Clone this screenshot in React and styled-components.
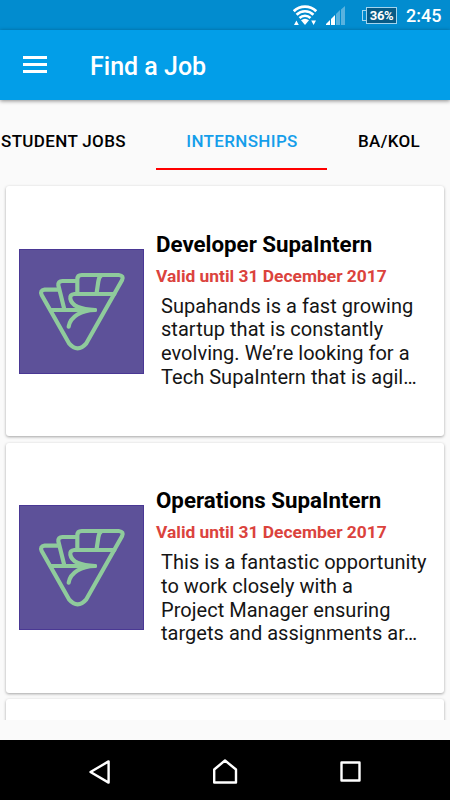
import styled, { createGlobalStyle } from "styled-components";

const GlobalStyle = createGlobalStyle`
  * {
    box-sizing: border-box;
  }

  body {
    margin: 0;
    background: #fafafa;
    font-family: Roboto, sans-serif;
  }

  h1, h2, p {
    margin: 0;
  }
`;

const Screen = styled.div`
  display: flex;
  flex-direction: column;
  width: 450px;
  height: 800px;
  overflow: hidden;
  background: #fafafa;
`;

const StatusBar = styled.div`
  display: flex;
  align-items: center;
  justify-content: flex-end;
  flex: 0 0 30px;
  padding-right: 10px;
  background: #028ccf;
  color: #ffffff;
`;

const Clock = styled.time`
  width: 34px;
  margin-left: 9px;
  padding-top: 2px;
  font-size: 18px;
  font-weight: 500;
  line-height: 20px;
  white-space: nowrap;
`;

const Battery = styled.div`
  display: flex;
  align-items: center;
  margin-left: 17px;

  &::before {
    content: "";
    width: 3px;
    height: 9px;
    border: 1px solid #a3d5ee;
    border-right: 0;
  }
`;

const BatteryLevel = styled.span`
  width: 31px;
  height: 17px;
  border: 1px solid #a3d5ee;
  background: #075b86;
  font-size: 13px;
  font-weight: 700;
  letter-spacing: -0.4px;
  line-height: 15px;
  text-align: center;
`;

const Signal = styled.svg`
  margin-left: 9px;
`;

const Toolbar = styled.header`
  display: flex;
  align-items: center;
  flex: 0 0 70px;
  padding: 4px 23px 0;
  gap: 43px;
  background: #029ee8;
  box-shadow: 0 1px 4px rgba(0, 0, 0, 0.45);
`;

const MenuButton = styled.button`
  display: flex;
  flex-direction: column;
  justify-content: space-between;
  width: 24px;
  height: 17px;
  margin-top: -6px;
  padding: 0;
  border: 0;
  background: none;
`;

const MenuLine = styled.span`
  height: 3px;
  background: #ffffff;
`;

const PageTitle = styled.h1`
  color: #ffffff;
  font-size: 25px;
  font-weight: 500;
  line-height: 30px;
`;

const Tabs = styled.nav`
  display: flex;
  flex: 0 0 70px;
`;

const Tab = styled.button`
  flex: 0 0 ${({ $width }) => $width}px;
  padding: 14px 0 0 1px;
  border: 0;
  border-bottom: 2px solid ${({ $active }) => ($active ? "#ff0000" : "transparent")};
  background: none;
  color: ${({ $active }) => ($active ? "#159eea" : "#000000")};
  font-family: inherit;
  font-size: 17px;
  font-weight: 500;
  letter-spacing: 0.35px;
  text-align: ${({ $align }) => $align || "center"};
  white-space: nowrap;
`;

const JobList = styled.main`
  display: flex;
  flex-direction: column;
  flex: 0 0 550px;
  gap: 6.5px;
  padding: 16px 6px 0;
  overflow: hidden;
`;

const Card = styled.article`
  display: flex;
  align-items: center;
  flex: 0 0 250px;
  gap: 12px;
  padding: 0 13px;
  border-radius: 3px;
  background: #ffffff;
  box-shadow: 0 1px 3px rgba(0, 0, 0, 0.35);
`;

const Logo = styled.svg`
  flex: 0 0 125px;
  background: #5d5199;
  outline: 1px solid #4a3894;
  outline-offset: -1px;
`;

const JobInfo = styled.div`
  padding-bottom: 3px;
`;

const JobTitle = styled.h2`
  color: #000000;
  font-size: 22.3px;
  font-weight: 700;
  line-height: 28px;
  white-space: nowrap;
`;

const Deadline = styled.p`
  margin-top: 5px;
  color: #db433d;
  font-size: 17.4px;
  font-weight: 700;
  line-height: 26px;
  white-space: nowrap;
`;

const Summary = styled.p`
  margin-top: 6px;
  padding-left: 5px;
  color: #151515;
  font-size: 20px;
  letter-spacing: 0.03px;
  line-height: 23.7px;
  white-space: pre;
`;

const NavBar = styled.footer`
  display: flex;
  align-items: center;
  justify-content: center;
  flex: 0 0 60px;
  gap: 102px;
  margin-top: 20px;
  padding-top: 3px;
  background: #000000;
`;

const jobs = [
  {
    title: "Developer SupaIntern",
    deadline: "Valid until 31 December 2017",
    summary:
      "Supahands is a fast growing\nstartup that is constantly\nevolving. We’re looking for a\nTech SupaIntern that is agil…",
  },
  {
    title: "Operations SupaIntern",
    deadline: "Valid until 31 December 2017",
    summary:
      "This is a fantastic opportunity\nto work closely with a\nProject Manager ensuring\ntargets and assignments ar…",
  },
];

const WifiIcon = () => (
  <svg width="24" height="21" viewBox="0 0 24 21" fill="none" stroke="#fff">
    <path d="M.8 6.2a16 16 0 0 1 22.4 0" strokeWidth="2.7" />
    <path d="M3.6 9.7a12 12 0 0 1 16.8 0" strokeWidth="2.7" />
    <path d="M6.5 13a8 8 0 0 1 11 0" strokeWidth="2.6" />
    <path d="M8 15.2q4-3 8 0L12 20z" fill="#fff" stroke="none" />
    <path d="M1 20l2.4-4.5L5.8 20zM18.2 15.5H23L20.6 20z" fill="#fff" stroke="none" />
  </svg>
);

const SignalIcon = () => (
  <Signal width="19" height="19" viewBox="0 0 19 19">
    <path d="M0 19v-1L4 14v5zM5 19v-6l4-4v10z" fill="#fff" />
    <path d="M10 19V8l4-4v15zM15 19V3.5L19 0v19z" fill="#58b2df" />
  </Signal>
);

const FistLogo = () => (
  <Logo width="125" height="125" viewBox="27 27 375 375" fill="none">
    <g stroke="#8fcb9c" strokeWidth="12.5" strokeLinecap="round" strokeLinejoin="round">
      <path d="M202 160V118Q202 105 215 105H326Q343 107 336 121L229 310Q203 340 177 310L95 165Q89 151 104 149H145" />
      <path d="M162 204L145 136Q144 123 157 123H200" />
      <path d="M274 106Q267 110 265 124L260 158" />
      <path d="M313 162H193Q179 163 181 176C184 194 207 208 255 210H122" />
      <path d="M255 210C215 211 181 229 176 260" />
    </g>
    <path d="M193 210L197 204L232 210L205 216Z" fill="#8fcb9c" />
  </Logo>
);

const JobCard = ({ job }) => (
  <Card>
    <FistLogo />
    <JobInfo>
      <JobTitle>{job.title}</JobTitle>
      <Deadline>{job.deadline}</Deadline>
      <Summary>{job.summary}</Summary>
    </JobInfo>
  </Card>
);

export default function App() {
  return (
    <Screen>
      <GlobalStyle />
      <StatusBar>
        <WifiIcon />
        <SignalIcon />
        <Battery>
          <BatteryLevel>36%</BatteryLevel>
        </Battery>
        <Clock>2:45</Clock>
      </StatusBar>

      <Toolbar>
        <MenuButton aria-label="Menu">
          <MenuLine />
          <MenuLine />
          <MenuLine />
        </MenuButton>
        <PageTitle>Find a Job</PageTitle>
      </Toolbar>

      <Tabs>
        <Tab $width={156} $align="left">STUDENT JOBS</Tab>
        <Tab $width={171} $active>INTERNSHIPS</Tab>
        <Tab $width={123}>BA/KOL</Tab>
      </Tabs>

      <JobList>
        {jobs.map((job) => (
          <JobCard key={job.title} job={job} />
        ))}
        {/* next card, cut off by the end of the list */}
        <Card />
      </JobList>

      <NavBar>
        <svg width="22" height="26" viewBox="0 0 22 26" fill="none" stroke="#fff" strokeWidth="2.4" strokeLinejoin="round">
          <path d="M2.5 13L20.6 2.4v21.2z" />
        </svg>
        <svg width="26" height="26" viewBox="0 0 26 26" fill="none" stroke="#fff" strokeWidth="2.4" strokeLinejoin="round">
          <path d="M2.2 23.5V10.5L13 1.5l11 9v13z" />
        </svg>
        <svg width="22" height="22" viewBox="0 0 22 22" fill="none" stroke="#fff" strokeWidth="2.4" strokeLinejoin="round">
          <path d="M1.5 1.5h18v18h-18z" />
        </svg>
      </NavBar>
    </Screen>
  );
}
